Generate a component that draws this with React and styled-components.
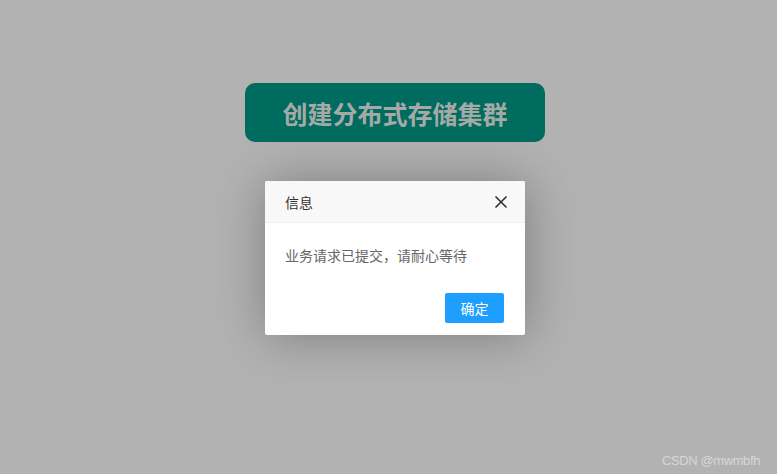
import React from 'react';
import styled, { createGlobalStyle } from 'styled-components';

const GlobalStyle = createGlobalStyle`
  html, body {
    margin: 0;
    padding: 0;
    background: #b2b2b2;
    font-family: "Liberation Sans", "Noto Sans CJK SC", sans-serif;
  }
`;

const Page = styled.div`
  position: relative;
  width: 777px;
  height: 474px;
  box-sizing: border-box;
  padding: 83px 0 0 13px;
  display: flex;
  flex-direction: column;
  align-items: center;
  overflow: hidden;
`;

const CreateButton = styled.div`
  width: 300px;
  height: 59px;
  border-radius: 10px;
  background: #006b5f;
  color: #a6aaa6;
  font-family: "Noto Sans CJK SC", sans-serif;
  font-weight: 700;
  font-size: 25px;
  display: flex;
  align-items: center;
  justify-content: center;
`;

const Dialog = styled.div`
  margin-top: 39px;
  width: 260px;
  background: #fff;
  border-radius: 2px;
  box-shadow: 1px 1px 50px rgba(0, 0, 0, 0.3);
  font-family: "Noto Sans CJK SC", sans-serif;
  font-size: 14px;
`;

const DialogHeader = styled.div`
  height: 42px;
  box-sizing: border-box;
  padding: 0 17px 0 20px;
  background: #f8f8f8;
  border-bottom: 1px solid #eee;
  border-radius: 2px 2px 0 0;
  display: flex;
  align-items: center;
  justify-content: space-between;
  color: #333;
`;

const CloseButton = styled.span`
  display: flex;
  width: 14px;
  height: 14px;
`;

const DialogBody = styled.div`
  padding: 20px;
  line-height: 24px;
  color: #666;
`;

const DialogFooter = styled.div`
  padding: 6px 21px 12px;
  display: flex;
  justify-content: flex-end;
`;

const OkButton = styled.div`
  height: 30px;
  width: 59px;
  box-sizing: border-box;
  background: #1e9fff;
  border-radius: 2px;
  color: #fff;
  display: flex;
  align-items: center;
  justify-content: center;
`;

const Watermark = styled.div`
  position: absolute;
  right: 17px;
  bottom: 6px;
  color: #d6d6d6;
  font-family: "Liberation Sans", sans-serif;
  font-size: 13px;
  letter-spacing: -0.4px;
`;

export default function App() {
  return (
    <>
      <GlobalStyle />
      <Page>
        <CreateButton>创建分布式存储集群</CreateButton>
        <Dialog>
          <DialogHeader>
            信息
            <CloseButton>
              <svg width="14" height="14" viewBox="0 0 14 14">
                <path d="M1.5 1.5 L12.5 12.5 M12.5 1.5 L1.5 12.5" stroke="#2f2f2f" strokeWidth="1.6" fill="none" />
              </svg>
            </CloseButton>
          </DialogHeader>
          <DialogBody>业务请求已提交，请耐心等待</DialogBody>
          <DialogFooter>
            <OkButton>确定</OkButton>
          </DialogFooter>
        </Dialog>
        <Watermark>CSDN @mwmbfh</Watermark>
      </Page>
    </>
  );
}
